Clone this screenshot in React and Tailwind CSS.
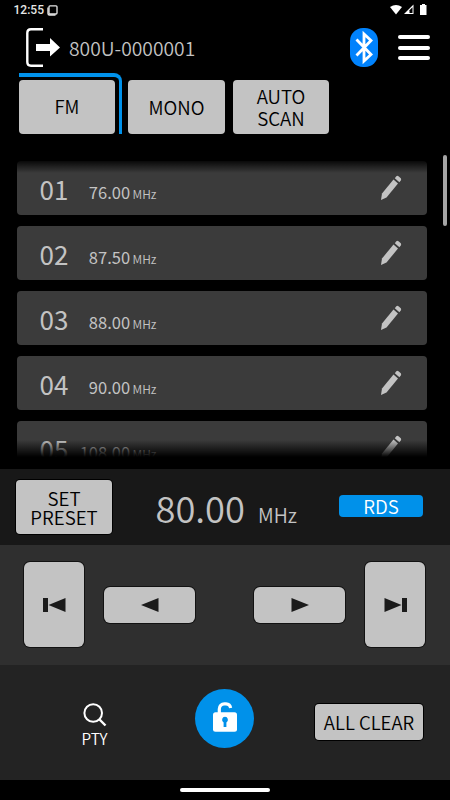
import clsx from "clsx";

const presets = [
  { no: "01", freq: "76.00" },
  { no: "02", freq: "87.50" },
  { no: "03", freq: "88.00" },
  { no: "04", freq: "90.00" },
  { no: "05", freq: "108.00" },
];

export default function App() {
  return (
    <div className="flex h-[800px] w-[450px] flex-col overflow-hidden bg-black font-['Noto_Sans_CJK_JP',sans-serif] font-[350] text-[#c3c3c3]">
      <StatusBar />
      <Header />

      {/* ================= MODE BUTTONS ================= */}
      <div className="flex h-[61px] shrink-0 pl-[19px]">
        <div className="w-[103px] rounded-tr-[8px] border-t-[4px] border-r-[3.5px] border-[#0091ea] pt-[3px]">
          <GreyButton className="h-[54px] w-[96px] pb-px text-[18.5px]">FM</GreyButton>
        </div>
        <GreyButton className="mt-[7px] ml-[6px] h-[54px] w-[97px] pt-px text-[18.7px]">MONO</GreyButton>
        <GreyButton className="mt-[7px] ml-[8px] h-[54px] w-[96px] text-[18.7px] leading-[22px]">
          <span>AUTO</span>
          <span>SCAN</span>
        </GreyButton>
      </div>

      {/* ================= PRESET LIST ================= */}
      <div className="relative mt-[21px] flex h-[302px] shrink-0 justify-between overflow-hidden pr-[3px] pl-[17px]">
        <ul className="flex w-[410px] flex-col gap-[11px] pt-[6px]">
          {presets.map((preset) => (
            <PresetRow key={preset.no} {...preset} />
          ))}
        </ul>
        <div className="h-[71px] w-[4px] rounded-full bg-[#a5a5a5]" />
        <div className="absolute top-[4px] left-0 h-[14px] w-[430px] bg-gradient-to-b from-black to-transparent" />
        <div className="absolute bottom-0 left-0 h-[17px] w-[430px] bg-gradient-to-b from-transparent to-black" />
      </div>

      {/* ================= CURRENT STATION ================= */}
      <section className="mt-[12px] flex h-[76px] shrink-0 items-center bg-[#181818] pl-[16px]">
        <GreyButton className="h-[54px] w-[96px] pb-px text-[18.7px] leading-[19px] ring-1 ring-black">
          <span>SET</span>
          <span>PRESET</span>
        </GreyButton>
        <div className="flex w-[227px] items-baseline pb-px pl-[43.5px]">
          <span className="text-[36.3px] leading-[54px]">80.00</span>
          <span className="ml-[13px] text-[19.5px]">MHz</span>
        </div>
        <div className="mb-[2px] flex h-[22px] w-[84px] items-center justify-center rounded-[4px] bg-[#0091ea] pt-px text-[18.7px] leading-none text-white">
          RDS
        </div>
      </section>

      {/* ================= TUNING ================= */}
      <section className="flex h-[120px] shrink-0 items-center justify-between bg-[#2f2f2f] pr-[25px] pb-px pl-[24px]">
        <GreyButton className="h-[85px] w-[60px] rounded-[6px] ring-1 ring-black/60">
          <SkipIcon />
        </GreyButton>
        <GreyButton className="mr-[39px] h-[36px] w-[91px] rounded-[6px] ring-1 ring-black/60">
          <ArrowIcon />
        </GreyButton>
        <GreyButton className="h-[36px] w-[91px] rounded-[6px] ring-1 ring-black/60">
          <ArrowIcon className="rotate-180" />
        </GreyButton>
        <GreyButton className="h-[85px] w-[60px] rounded-[6px] ring-1 ring-black/60">
          <SkipIcon className="rotate-180" />
        </GreyButton>
      </section>

      {/* ================= FOOTER ================= */}
      <footer className="flex h-[115px] shrink-0 bg-[#232323]">
        <button className="flex w-[195px] flex-col items-center pt-[38px] pr-[6px] text-[15.3px] leading-[23px] text-white">
          <svg className="h-[24px] w-[24px]" viewBox="0 0 24 24" fill="none" stroke="currentColor" strokeWidth="2">
            <circle cx="10.2" cy="10" r="8.8" />
            <path d="m16 16 6.5 6.5" strokeWidth="2.4" />
          </svg>
          PTY
        </button>
        <button className="mt-[24px] flex h-[59px] w-[59px] items-center justify-center rounded-full bg-[#0091ea]">
          <svg className="mb-[3px] h-[30px] w-[24px]" viewBox="0 0 24 30" fill="none">
            <path d="M6.3 12V7A5 5 0 0 1 11.3 1.8H13A4.8 4.8 0 0 1 17.6 6" stroke="white" strokeWidth="3.2" />
            <rect y="10.3" width="24" height="19.4" rx="2.5" fill="white" />
            <path d="M12 14.8a3 3 0 0 1 1.4 5.6V25h-2.8v-4.6A3 3 0 0 1 12 14.8Z" fill="#0091ea" />
          </svg>
        </button>
        <GreyButton className="mt-[39px] ml-[61px] h-[36px] w-[108px] pt-px text-[18.5px] ring-1 ring-black">
          ALL CLEAR
        </GreyButton>
      </footer>

      <div className="flex h-[20px] shrink-0 items-center justify-center">
        <div className="h-[4px] w-[90px] rounded-full bg-white" />
      </div>
    </div>
  );
}

/* ==================== Sub Components ==================== */

const StatusBar = () => (
  <div className="flex h-[20px] shrink-0 items-center justify-between pr-[23px] pl-[13.5px] text-[#e6e6e6]">
    <div className="flex items-center gap-[3px]">
      <span className="font-[Roboto,sans-serif] text-[12px] leading-[20px] font-medium">12:55</span>
      <svg className="h-[11px] w-[11px]" viewBox="0 0 11 11" fill="none" stroke="currentColor">
        <path d="M1 2.5V8.5Q1 10 2.5 10H8.5" strokeWidth="1.4" />
        <rect x="2" y="0.8" width="8" height="8.2" rx="1" strokeWidth="1.3" />
      </svg>
    </div>
    <svg className="h-[12px] w-[37px]" viewBox="0 0 37 12" fill="white">
      <path d="M0 3Q6 -1 12 3L6 10.5Z" />
      <path d="M23.5 .5V10H14Z" />
      <path d="M19.5 6.2 22.5 3.2V9H19.5Z" fill="black" />
      <path d="M32 0H35V1H36.5V11H30V1H32Z" />
    </svg>
  </div>
);

const Header = () => (
  <header className="flex h-[53px] shrink-0 pt-[8px] pl-[26px]">
    <svg className="h-[39px] w-[35px]" viewBox="0 0 35 39" fill="none">
      <path d="M17 1.3H5Q1.3 1.3 1.3 5V34Q1.3 37.7 5 37.7H17" stroke="white" strokeWidth="2.4" />
      <path d="M10 16H24V10L34 19.5L24 28.5V23H10Z" fill="white" />
    </svg>
    <span className="ml-[8px] w-[281px] text-[19.3px] leading-[40px]">800U-0000001</span>
    <svg className="h-[39px] w-[28px]" viewBox="0 0 28 39" fill="none">
      <rect width="28" height="39" rx="13" fill="#0082fc" />
      <path d="M6.5 11.5 21 26.5 14 33V6L21 12.5 6.5 27.5" stroke="white" strokeWidth="2.8" />
    </svg>
    <div className="mt-[7px] ml-[20px] flex h-[25px] w-[32px] flex-col justify-between">
      <span className="h-[4px] rounded-full bg-white" />
      <span className="h-[4px] rounded-full bg-white" />
      <span className="h-[4px] rounded-full bg-white" />
    </div>
  </header>
);

const PresetRow = ({ no, freq }) => (
  <li className="flex h-[54px] shrink-0 items-center rounded-[4px] bg-[#3b3b3b] pr-[25px] pl-[22.5px] font-normal">
    <span className="w-[34.5px] pt-px text-[26px] leading-[50px]">{no}</span>
    <div className="flex w-[82.5px] items-baseline justify-end pt-[7px]">
      <span className="text-[16.5px] leading-[24px]">{freq}</span>
      <span className="ml-[2.5px] text-[12px] font-[350]">MHz</span>
    </div>
    <svg className="mb-px ml-auto h-[26px] w-[22px]" viewBox="0 0 22 26" fill="#c3c3c3">
      <path d="M1 25 2 18.5 13.5 4.5 18 8.5 6.5 22.5Z" />
      <path d="M14.8 3.2 16.3 1.2Q17.4.4 18.5 1.2L20.8 3.2Q21.6 4.3 20.8 5.5L19.4 7.2Z" />
    </svg>
  </li>
);

const GreyButton = ({ className, children }) => (
  <button
    className={clsx(
      "flex shrink-0 flex-col items-center justify-center text-center text-black bg-[#c3c3c3]",
      !className.includes("rounded") && "rounded-[4px]",
      className
    )}
  >
    {children}
  </button>
);

const ArrowIcon = ({ className }) => (
  <svg className={clsx("h-[14px] w-[18px]", className)} viewBox="0 0 18 14" fill="#1b1b1b">
    <path d="M0 7 17.5 0V14Z" />
  </svg>
);

const SkipIcon = ({ className }) => (
  <svg className={clsx("h-[14px] w-[23px]", className)} viewBox="0 0 23 14" fill="#1b1b1b">
    <path d="M0 0H5V14H0ZM5.5 7 22.5 0V14Z" />
  </svg>
);
